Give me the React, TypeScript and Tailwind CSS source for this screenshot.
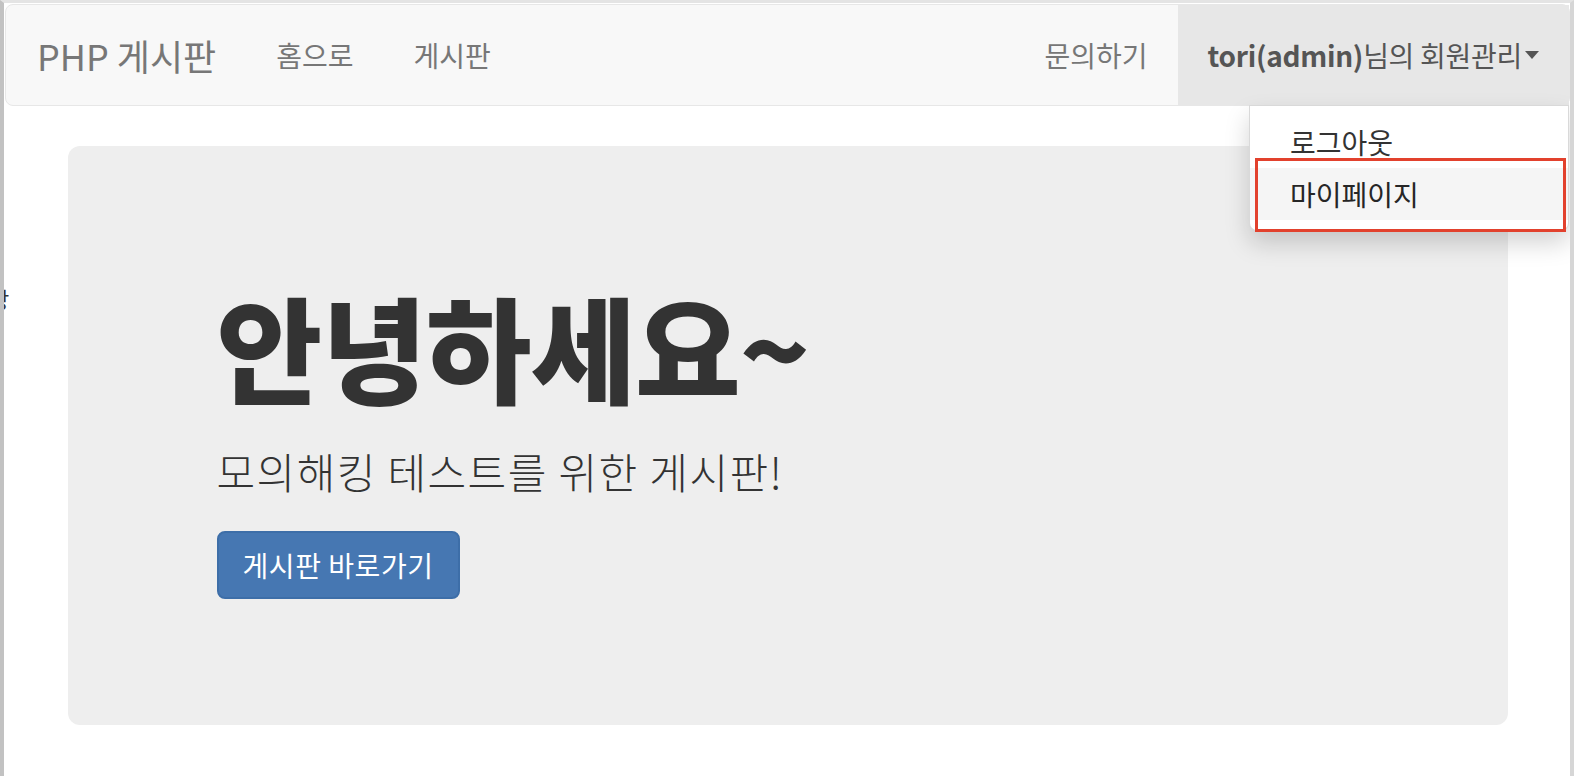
import React from 'react';

const navLink = 'block px-[30px] py-[30px] text-[28px] leading-[40px] text-[#777]';

function DropdownMenu() {
  return (
    <div className="absolute right-0 top-full z-10 w-[320px] rounded-b-lg border border-black/15 bg-white py-[10px] shadow-[0_12px_24px_rgba(0,0,0,0.175)]">
      <div className="h-[52px] px-[40px] py-[6px] text-[28px] leading-[40px] text-[#333]">로그아웃</div>
      <div className="h-[52px] bg-[#f5f5f5] px-[40px] py-[6px] text-[28px] leading-[40px] text-[#262626]">마이페이지</div>
      {/* 캡처용 강조 박스 */}
      <div className="absolute left-[5px] top-[52px] h-[74px] w-[311px] border-[3px] border-[#e2412d]" />
    </div>
  );
}

export default function App() {
  return (
    <div className="relative min-h-screen overflow-hidden border-l-4 border-r-4 border-t-[3px] border-l-[#c2c2c2] border-r-[#d6d6d6] border-t-[#e4e4e4] bg-white pl-px pt-px font-['Noto_Sans_CJK_KR','Noto_Sans',sans-serif]">
      {/* 왼쪽 바깥 잘린 글자 */}
      <span className="absolute -left-[15px] top-[284px] text-[22px] leading-none text-[#333]">방</span>

      <nav className="flex h-[102px] items-stretch justify-between rounded-lg border border-[#e7e7e7] bg-[#f8f8f8]">
        <div className="flex">
          <a className="block py-[30px] pl-[31px] pr-[30px] text-[36px] leading-[40px] text-[#777]">PHP 게시판</a>
          <ul className="flex">
            <li><a className={navLink}>홈으로</a></li>
            <li><a className={navLink}>게시판</a></li>
          </ul>
        </div>
        <ul className="flex">
          <li><a className={navLink}>문의하기</a></li>
          <li className="relative bg-[#e7e7e7]">
            <a className="flex items-center px-[30px] py-[30px] text-[28px] leading-[40px] tracking-[-0.01em] text-[#555]">
              <b className="font-bold">tori(admin)</b>님의 회원관리
              <span className="ml-[3px] inline-block h-0 w-0 border-l-[7px] border-r-[7px] border-t-[8px] border-l-transparent border-r-transparent border-t-[#555]" />
            </a>
            <DropdownMenu />
          </li>
        </ul>
      </nav>

      <div className="mx-auto w-[1500px] px-[30px]">
        <div className="mt-[40px] rounded-[12px] bg-[#eeeeee] py-[96px] pl-[149px] pr-[120px] text-[#333]">
          <h1 className="mb-[26px] mt-[34px] text-[115px] font-black leading-[139px] tracking-[-0.01em]">안녕하세요~</h1>
          <p className="mb-[30px] text-[42px] font-light leading-[60px] tracking-[0.034em]">모의해킹 테스트를 위한 게시판!</p>
          <p className="mb-[30px]">
            <a className="inline-flex h-[68px] items-center rounded-[8px] border-2 border-[#3d6ea8] bg-[#4677b2] px-[24px] text-[28px] leading-[40px] tracking-[0.02em] text-white">
              게시판 바로가기
            </a>
          </p>
        </div>
      </div>
    </div>
  );
}
